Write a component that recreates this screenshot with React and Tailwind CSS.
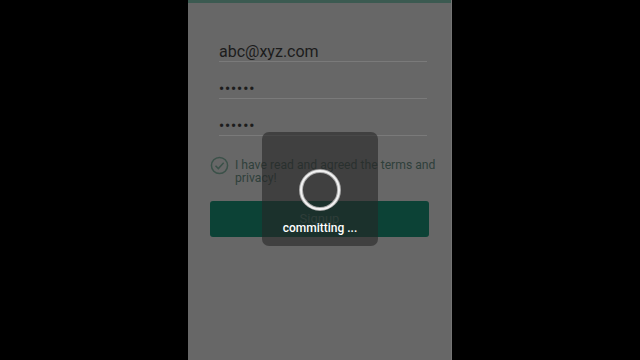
import React from 'react';

const Field = ({ value, dots }) => (
    <div className="ml-[9px] mr-[2px] border-b border-[#7a7a7a] h-[37px] flex items-end">
        {dots ? (
            <span className="text-[#1c1c1c] text-[14px] tracking-[1px] leading-none pb-[2px] font-bold">{value}</span>
        ) : (
            <span className="text-[#1c1c1c] text-[16px] leading-[19px]">{value}</span>
        )}
    </div>
);

export default function App() {
    return (
        <div className="w-[640px] h-[360px] bg-black flex justify-center overflow-hidden" style={{ fontFamily: 'Roboto, "Noto Sans", sans-serif' }}>
            <div className="relative w-[264px] h-full bg-[#676767] border-r border-[#747474] flex flex-col">
                <div className="h-[3px] bg-[#3b5a51]" />

                {/* Form */}
                <div className="pl-[22px] pr-[22px] pt-[22px] flex flex-col">
                    <Field value="abc@xyz.com" />
                    <Field value="••••••" dots />
                    <Field value="••••••" dots />

                    <div className="flex items-start gap-[6px] mt-[20px] -mr-[10px]">
                        <svg width="19" height="19" viewBox="0 0 20 20" className="shrink-0">
                            <circle cx="10" cy="10" r="8.5" fill="none" stroke="#3b5149" strokeWidth="1.6" />
                            <path d="M5.8 10.2l3 3 5.6-6" fill="none" stroke="#3b5149" strokeWidth="1.6" />
                        </svg>
                        <p className="text-[12.2px] leading-[13px] text-[#2f403b] pt-[3px]">
                            I have read and agreed the terms and privacy!
                        </p>
                    </div>

                    <div className="mt-[16px] h-[36px] bg-[#0c4236] rounded-[3px] flex items-center justify-center">
                        <span className="text-[13px] text-[#3a5f55]">Signup</span>
                    </div>
                </div>

                {/* Loading dialog */}
                <div className="absolute left-[74px] top-[132px] w-[116px] h-[114px] bg-[#262626]/60 rounded-[7px] flex flex-col items-center">
                    <svg width="44" height="44" viewBox="0 0 44 44" className="mt-[36px]">
                        <circle cx="22" cy="22" r="19" fill="none" stroke="#a8a8a8" strokeWidth="4" />
                        <circle cx="22" cy="22" r="19" fill="none" stroke="#f2f2f2" strokeWidth="2" />
                    </svg>
                    <span className="mt-[10px] text-white text-[12px] font-medium leading-none">committing ...</span>
                </div>
            </div>
        </div>
    );
}
